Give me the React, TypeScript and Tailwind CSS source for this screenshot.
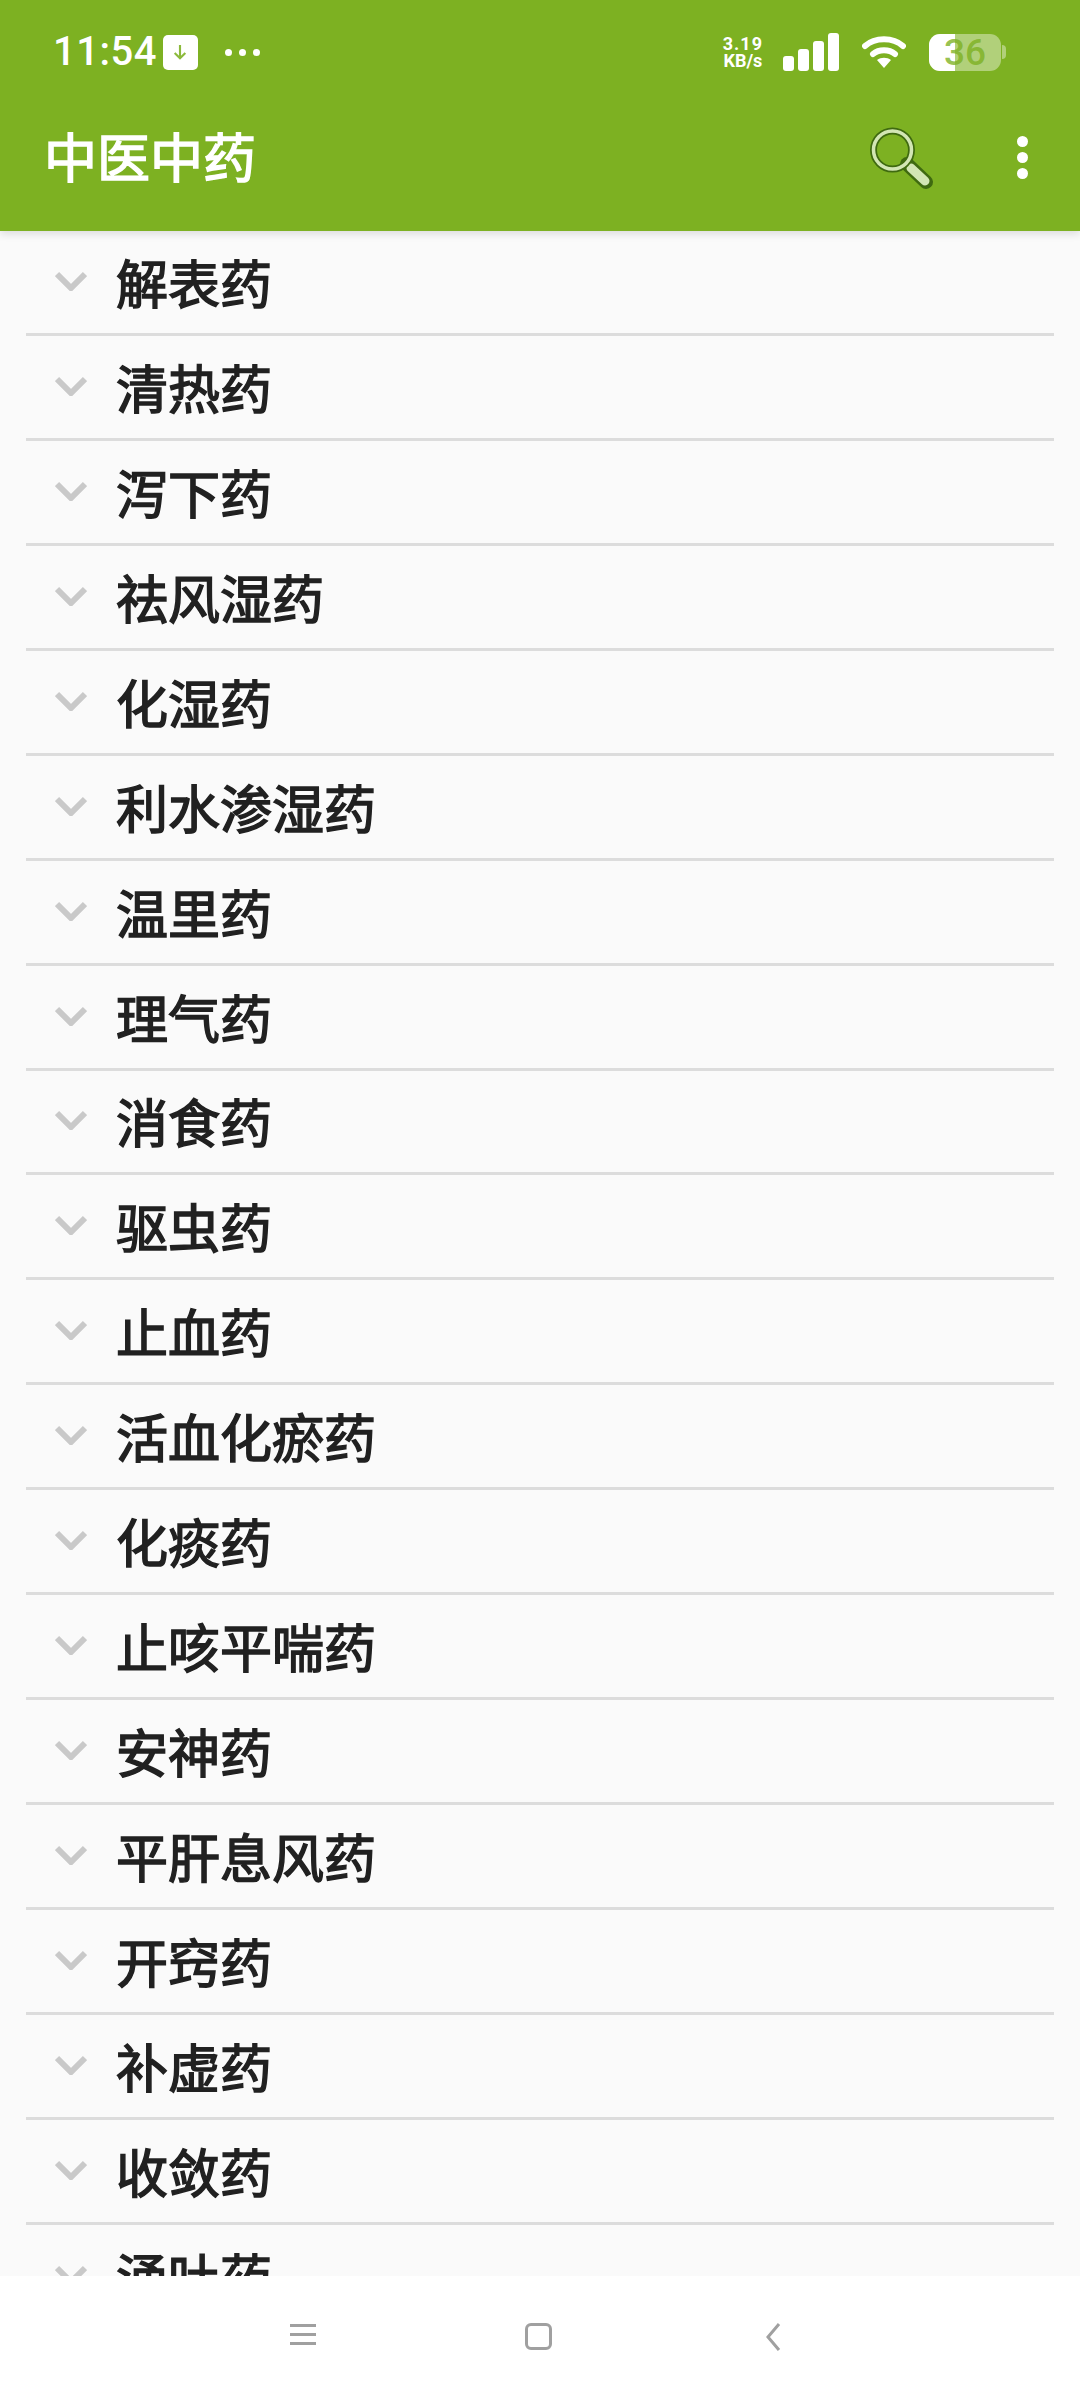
import React from 'react';

const CJK = "font-['Roboto','Noto_Sans_CJK_SC',sans-serif]";

const categories = [
  '解表药', '清热药', '泻下药', '祛风湿药', '化湿药', '利水渗湿药', '温里药',
  '理气药', '消食药', '驱虫药', '止血药', '活血化瘀药', '化痰药', '止咳平喘药',
  '安神药', '平肝息风药', '开窍药', '补虚药', '收敛药', '涌吐药',
];

const StatusBar = () => (
  <div className="flex h-[102px] items-center justify-between pl-[53px] pr-[74px] pt-[2px]">
    <div className="flex items-center">
      <span className="text-[40px] font-medium leading-none text-white font-['Roboto',sans-serif] tracking-[0.5px]">11:54</span>
      <span className="ml-[6px] flex h-[35px] w-[35px] items-center justify-center rounded-[5px] bg-white">
        <svg width="16" height="18" viewBox="0 0 18 20" fill="none" stroke="#8cba3c" strokeWidth="2.4">
          <path d="M9 2v15M3 11l6 6 6-6" />
        </svg>
      </span>
      <span className="ml-[27px] flex gap-[7px]">
        <span className="h-[7px] w-[7px] rounded-full bg-white" />
        <span className="h-[7px] w-[7px] rounded-full bg-white" />
        <span className="h-[7px] w-[7px] rounded-full bg-white" />
      </span>
    </div>
    <div className="flex items-center">
      <div className="flex flex-col items-center text-[18px] font-bold leading-[17px] text-white font-['Roboto',sans-serif]">
        <span className="tracking-[1px]">3.19</span>
        <span>KB/s</span>
      </div>
      <div className="ml-[20px] flex h-[38px] items-end gap-[4px]">
        <span className="h-[15px] w-[11px] rounded-[3px] bg-white" />
        <span className="h-[22px] w-[11px] rounded-[3px] bg-white" />
        <span className="h-[30px] w-[11px] rounded-[3px] bg-white" />
        <span className="h-[38px] w-[11px] rounded-[3px] bg-white" />
      </div>
      <svg className="ml-[23px]" width="44" height="34" viewBox="0 0 44 34" fill="none">
        <path d="M3 11C13 2 31 2 41 11" stroke="white" strokeWidth="6" strokeLinecap="round" />
        <path d="M11 19C17 14 27 14 33 19" stroke="white" strokeWidth="6" strokeLinecap="round" />
        <path d="M15 25C19 22 25 22 29 25L22 33Z" fill="white" />
      </svg>
      <div className="relative ml-[23px] flex h-[37px] w-[72px] rounded-[11px] bg-white/40">
        <span className="h-full w-[26px] rounded-l-[11px] bg-white" />
        <span className="absolute inset-0 flex items-center justify-center text-[37px] font-medium leading-none text-[#7db122]/80 font-['Roboto',sans-serif]">36</span>
      </div>
      <span className="ml-[1px] h-[14px] w-[4px] rounded-r-full bg-white/40" />
    </div>
  </div>
);

const Toolbar = () => (
  <div className="flex h-[129px] items-center justify-between pb-[12px] pl-[44px] pr-[52px]">
    <h1 className={`text-[53px] leading-none text-white [-webkit-text-stroke:1.5px_white] ${CJK}`}>中医中药</h1>
    <div className="mb-[6px] flex items-center">
      <svg width="64" height="64" viewBox="0 0 64 64" fill="none">
        <path d="M38 38L57 56" stroke="#3f6a10" strokeWidth="14" strokeLinecap="round" />
        <path d="M42 42L56 55" stroke="#d3e6b4" strokeWidth="9" strokeLinecap="round" />
        <circle cx="23.5" cy="24" r="19" stroke="#3f6a10" strokeWidth="7" />
        <circle cx="23.5" cy="24" r="19" stroke="#d3e6b4" strokeWidth="3.5" />
      </svg>
      <div className="ml-[84px] flex flex-col gap-[5px]">
        <span className="h-[11px] w-[11px] rounded-full bg-white" />
        <span className="h-[11px] w-[11px] rounded-full bg-white" />
        <span className="h-[11px] w-[11px] rounded-full bg-white" />
      </div>
    </div>
  </div>
);

const Row = ({ label }: { label: string }) => (
  <div className="flex h-[104.95px] shrink-0 items-center border-b-[3px] border-[#dcdcdc]">
    <svg className="ml-[29px] mb-[2px]" width="32" height="20" viewBox="0 0 32 20" fill="none" stroke="#c9c9c9" strokeWidth="6">
      <path d="M2 3l14 14L30 3" />
    </svg>
    <span className={`ml-[29px] mt-[10px] text-[52px] leading-none text-[#212121] [-webkit-text-stroke:1.5px_#212121] ${CJK}`}>{label}</span>
  </div>
);

const NavBar = () => (
  <div className="flex h-[124px] shrink-0 items-start bg-white pl-[290px] pt-[36px]">
    <div className="mt-[12px] flex w-[26px] flex-col gap-[6px]">
      <span className="h-[3px] bg-[#a0a0a0]" />
      <span className="h-[3px] bg-[#a0a0a0]" />
      <span className="h-[3px] bg-[#a0a0a0]" />
    </div>
    <span className="ml-[209px] mt-[11px] h-[27px] w-[27px] rounded-[6px] border-[3px] border-[#a0a0a0]" />
    <svg className="ml-[212px] mt-[10px]" width="18" height="30" viewBox="0 0 18 30" fill="none" stroke="#a0a0a0" strokeWidth="3">
      <path d="M15 2L4 15l11 13" />
    </svg>
  </div>
);

export default function App() {
  return (
    <div className="flex h-[2400px] w-[1080px] flex-col overflow-hidden bg-[#fafafa]">
      <div className="z-10 h-[231px] shrink-0 bg-[#7db122] shadow-[0_3px_8px_rgba(0,0,0,0.12)]">
        <StatusBar />
        <Toolbar />
      </div>
      <div className="min-h-0 flex-1 overflow-hidden px-[26px]">
        {categories.map((c) => (
          <Row key={c} label={c} />
        ))}
      </div>
      <NavBar />
    </div>
  );
}
